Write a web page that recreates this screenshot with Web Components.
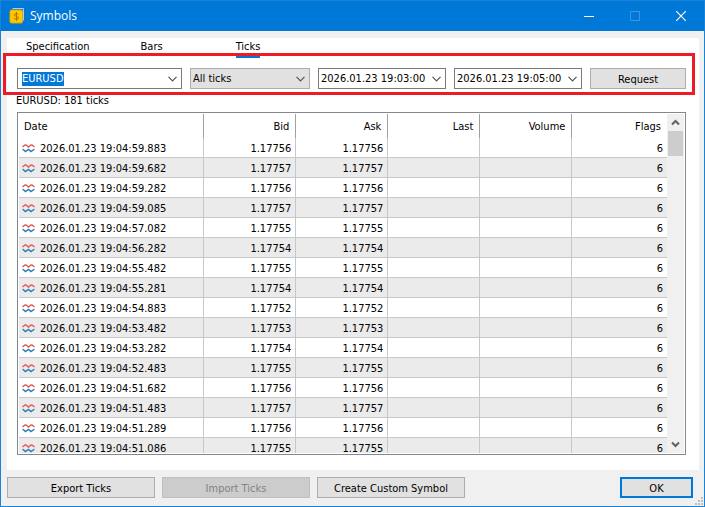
<!DOCTYPE html>
<html lang="en">
<head>
<meta charset="utf-8">
<title>Symbols</title>
<style>
    html, body {
        height: 100%;
        margin: 0;
    }
    body {
        font: 11px/14px "DejaVu Sans Condensed", "DejaVu Sans", sans-serif;
        color: #000;
        overflow: hidden;
    }
</style>
</head>
<body>
<symbols-window></symbols-window>

<script>
const TICKS = [
    ["19:04:59.883", "1.17756"],
    ["19:04:59.682", "1.17757"],
    ["19:04:59.282", "1.17756"],
    ["19:04:59.085", "1.17757"],
    ["19:04:57.082", "1.17755"],
    ["19:04:56.282", "1.17754"],
    ["19:04:55.482", "1.17755"],
    ["19:04:55.281", "1.17754"],
    ["19:04:54.883", "1.17752"],
    ["19:04:53.482", "1.17753"],
    ["19:04:53.282", "1.17754"],
    ["19:04:52.483", "1.17755"],
    ["19:04:51.682", "1.17756"],
    ["19:04:51.483", "1.17757"],
    ["19:04:51.289", "1.17756"],
    ["19:04:51.086", "1.17755"]
];

const CHEVRON = `<svg width="9" height="6" viewBox="0 0 9 6"><path d="M.5 .8l4 4 4-4" fill="none" stroke="#555" stroke-width="1.2"/></svg>`;

// red wave over a blue one, shown in front of every tick
const WAVES = `<svg width="13" height="9" viewBox="0 0 13 9" fill="none" stroke-width="1.5"><path d="M.5 3L3 1h1l2.500 2L9 1h1l2.500 2" stroke="#ea5a5a"/><path d="M.5 5.500h.5L3.500 7.500l3-2 2.500 2 3-2h.5" stroke="#2f7fb8"/></svg>`;

class TitleBar extends HTMLElement {
    constructor() {
        super();
        this.attachShadow({ mode: "open" });
    }

    connectedCallback() {
        this.shadowRoot.innerHTML = `
            <style>
                :host {
                    display: flex;
                    align-items: center;
                    height: 30px;
                    flex: none;
                    padding-left: 8px;
                    background: #0078d7;
                    color: #fff;
                    font: 12px/16px "Open Sans", "Noto Sans", sans-serif;
                }
                .title {
                    flex: 1;
                    margin: 0 0 0 5px;
                    font: inherit;
                }
                button {
                    display: flex;
                    align-items: center;
                    justify-content: center;
                    width: 46px;
                    height: 30px;
                    padding: 0;
                    border: 0;
                    background: none;
                    color: #fff;
                }
                button:disabled {
                    color: #3b96df;
                }
            </style>
            <svg width="16" height="16" viewBox="0 0 16 16">
                <path d="M3.5 .5h11v12" fill="none" stroke="#a9cfe8"/>
                <rect x="1" y="2" width="12.5" height="13" rx="1.5" fill="#ffc800" stroke="#e5a500"/>
                <path d="M9.500 6.500C9 5.300 5.300 5 5.300 6.900c0 1.900 4.400 1.100 4.400 3 0 1.900-4 1.600-4.700.3M7.500 4v9" fill="none" stroke="#b07800"/>
            </svg>
            <h1 class="title"><slot></slot></h1>
            <button type="button" aria-label="Minimize"><svg width="10" height="10"><path d="M0 5.5h10" stroke="currentColor"/></svg></button>
            <button type="button" aria-label="Maximize" disabled><svg width="10" height="10"><rect x=".5" y=".5" width="9" height="9" fill="none" stroke="currentColor"/></svg></button>
            <button type="button" aria-label="Close"><svg width="10" height="10"><path d="M0 0l10 10M10 0L0 10" stroke="currentColor" stroke-width="1.2"/></svg></button>
        `;
    }
}

class TabStrip extends HTMLElement {
    constructor() {
        super();
        this.attachShadow({ mode: "open" });
    }

    connectedCallback() {
        this.shadowRoot.innerHTML = `
            <style>
                :host {
                    display: flex;
                    gap: 51px;
                    height: 20px;
                    padding-left: 10px;
                }
                button {
                    padding: 0;
                    border: 0;
                    border-bottom: 2px solid transparent;
                    background: none;
                    font: inherit;
                    color: inherit;
                }
                button:last-child {
                    margin-left: 22px;
                }
                button[aria-selected="true"] {
                    border-color: #0078d7;
                }
            </style>
            <button type="button" role="tab">Specification</button>
            <button type="button" role="tab">Bars</button>
            <button type="button" role="tab" aria-selected="true">Ticks</button>
        `;
        this.setAttribute("role", "tablist");
    }
}

class ComboField extends HTMLElement {
    constructor() {
        super();
        this.attachShadow({ mode: "open" });
    }

    connectedCallback() {
        const value = this.getAttribute("value");
        const label = this.getAttribute("label");
        const list = this.hasAttribute("list-only");
        const control = list
            ? `<select aria-label="${label}"><option>${value}</option></select>`
            : `<input type="text" aria-label="${label}" value="${value}">`;

        this.shadowRoot.innerHTML = `
            <style>
                :host {
                    display: flex;
                    align-items: center;
                    box-sizing: border-box;
                    height: 21px;
                    min-width: 0;
                    padding-right: 4px;
                    border: 1px solid #7a7a7a;
                    background: #fff;
                }
                :host([list-only]) {
                    border-color: #adadad;
                    background: #e1e1e1;
                }
                input, select {
                    flex: 1;
                    min-width: 0;
                    margin: 0;
                    padding: 1px 0 0 2px;
                    border: 0;
                    outline: 0;
                    appearance: none;
                    background: none;
                    font: inherit;
                    color: inherit;
                }
                :host([selected]) input {
                    padding: 0 0 0 4px;
                }
                ::selection {
                    background: #0078d7;
                    color: #fff;
                }
                svg {
                    flex: none;
                    pointer-events: none;
                }
            </style>
            ${control}${CHEVRON}
        `;
        if (this.hasAttribute("selected")) {
            this.shadowRoot.querySelector("input").select();
        }
    }
}

class PushButton extends HTMLElement {
    constructor() {
        super();
        this.attachShadow({ mode: "open" });
    }

    connectedCallback() {
        this.shadowRoot.innerHTML = `
            <style>
                :host {
                    display: flex;
                    height: 21px;
                }
                button {
                    flex: 1;
                    padding: 2px 0 0;
                    border: 1px solid #adadad;
                    background: #e1e1e1;
                    font: inherit;
                    color: inherit;
                }
                button:disabled {
                    border-color: #bfbfbf;
                    background: #ccc;
                    color: #838383;
                }
                :host([default]) button {
                    border: 2px solid #0078d7;
                }
            </style>
            <button type="button" ${this.hasAttribute("disabled") ? "disabled" : ""}><slot></slot></button>
        `;
    }
}

class TickTable extends HTMLElement {
    constructor() {
        super();
        this.attachShadow({ mode: "open" });
    }

    connectedCallback() {
        const rows = TICKS.map(([time, price]) => `
            <tr>
                <td><span class="date">${WAVES}2026.01.23 ${time}</span></td>
                <td>${price}</td>
                <td>${price}</td>
                <td></td>
                <td></td>
                <td>6</td>
            </tr>`).join("");

        this.shadowRoot.innerHTML = `
            <style>
                :host {
                    display: flex;
                    min-height: 0;
                    padding: 1px;
                    border: 1px solid #828790;
                    background: #fff;
                }
                .view {
                    flex: 1;
                    overflow: hidden;
                }
                table {
                    width: 100%;
                    border-collapse: separate;
                    border-spacing: 0;
                    table-layout: fixed;
                }
                th, td {
                    box-sizing: border-box;
                    height: 20px;
                    padding: 2px 4px 0 0;
                    border-right: 1px solid #c8c8c8;
                    border-bottom: 1px solid #c8c8c8;
                    text-align: right;
                    font-weight: normal;
                }
                th {
                    height: 24px;
                    padding-right: 6px;
                    border-right-color: #a0a0a0;
                    border-bottom: 0;
                }
                th:first-child {
                    padding-left: 5px;
                    text-align: left;
                }
                td:first-child {
                    padding-left: 3px;
                    text-align: left;
                }
                th:last-child, td:last-child {
                    border-right: 0;
                }
                tbody tr:nth-child(even) {
                    background: #ebebeb;
                }
                .date {
                    display: flex;
                    align-items: center;
                    gap: 5px;
                }
                .scroll {
                    display: flex;
                    flex-direction: column;
                    width: 17px;
                    background: #f0f0f0;
                }
                .scroll button {
                    height: 17px;
                    padding: 0;
                    border: 0;
                    background: none;
                    line-height: 0;
                }
                .track {
                    flex: 1;
                }
                .thumb {
                    height: 25px;
                    margin: 0 1px;
                    background: #cdcdcd;
                }
            </style>
            <div class="view">
                <table>
                    <colgroup>
                        <col style="width: 28.6%"><col style="width: 14.2%"><col style="width: 14.2%"><col style="width: 14.2%"><col style="width: 14.2%"><col>
                    </colgroup>
                    <thead><tr><th>Date</th><th>Bid</th><th>Ask</th><th>Last</th><th>Volume</th><th>Flags</th></tr></thead>
                    <tbody>${rows}</tbody>
                </table>
            </div>
            <div class="scroll">
                <button type="button" aria-label="Scroll up"><svg width="9" height="7"><path d="M1 5.5l3.500-3.500L8 5.5" fill="none" stroke="#606060" stroke-width="2"/></svg></button>
                <div class="track"><div class="thumb"></div></div>
                <button type="button" aria-label="Scroll down"><svg width="9" height="7"><path d="M1 1.5l3.500 3.500L8 1.5" fill="none" stroke="#606060" stroke-width="2"/></svg></button>
            </div>
        `;
    }
}

class SymbolsWindow extends HTMLElement {
    constructor() {
        super();
        this.attachShadow({ mode: "open" });
    }

    connectedCallback() {
        this.shadowRoot.innerHTML = `
            <style>
                :host {
                    position: relative;
                    display: flex;
                    flex-direction: column;
                    box-sizing: border-box;
                    height: 100%;
                    border: 1px solid #1883d7;
                    background: #f0f0f0;
                }
                .panel {
                    flex: 1;
                    display: flex;
                    flex-direction: column;
                    min-height: 0;
                    margin: 7px 5px 0 6px;
                    padding: 0 13px 15px 9px;
                    background: #fff;
                }
                .filters {
                    display: grid;
                    grid-template-columns: 165fr 120fr 128fr 128fr 96fr;
                    gap: 8px;
                    margin: 10px 0 0 1px;
                }
                .count {
                    margin: 5px 0 4px;
                }
                tick-table {
                    flex: 1;
                    margin-left: 1px;
                }
                .actions {
                    display: flex;
                    gap: 7px;
                    padding: 7px 11px 8px 6px;
                }
                .actions push-button {
                    flex: 0 1 148px;
                }
                .actions push-button[default] {
                    flex-basis: 73px;
                    margin-left: auto;
                }
                .highlight {
                    position: absolute;
                    top: 52px;
                    left: 2px;
                    right: 9px;
                    height: 36px;
                    border: 3px solid #ed1c24;
                    pointer-events: none;
                }
                .grip {
                    position: absolute;
                    right: 1px;
                    bottom: 1px;
                }
            </style>
            <title-bar>Symbols</title-bar>
            <main class="panel">
                <tab-strip></tab-strip>
                <div class="filters">
                    <combo-field label="Symbol" value="EURUSD" selected></combo-field>
                    <combo-field label="Tick type" value="All ticks" list-only></combo-field>
                    <combo-field label="From" value="2026.01.23 19:03:00"></combo-field>
                    <combo-field label="To" value="2026.01.23 19:05:00"></combo-field>
                    <push-button>Request</push-button>
                </div>
                <p class="count">EURUSD: 181 ticks</p>
                <tick-table></tick-table>
            </main>
            <footer class="actions">
                <push-button>Export Ticks</push-button>
                <push-button disabled>Import Ticks</push-button>
                <push-button>Create Custom Symbol</push-button>
                <push-button default>OK</push-button>
            </footer>
            <div class="highlight"></div>
            <svg class="grip" width="8" height="8" fill="#bfbfbf"><path d="M6 0h2v2H6zM3 3h2v2H3zM6 3h2v2H6zM0 6h2v2H0zM3 6h2v2H3zM6 6h2v2H6z"/></svg>
        `;
    }
}

customElements.define("title-bar", TitleBar);
customElements.define("tab-strip", TabStrip);
customElements.define("combo-field", ComboField);
customElements.define("push-button", PushButton);
customElements.define("tick-table", TickTable);
customElements.define("symbols-window", SymbolsWindow);
</script>
</body>
</html>
